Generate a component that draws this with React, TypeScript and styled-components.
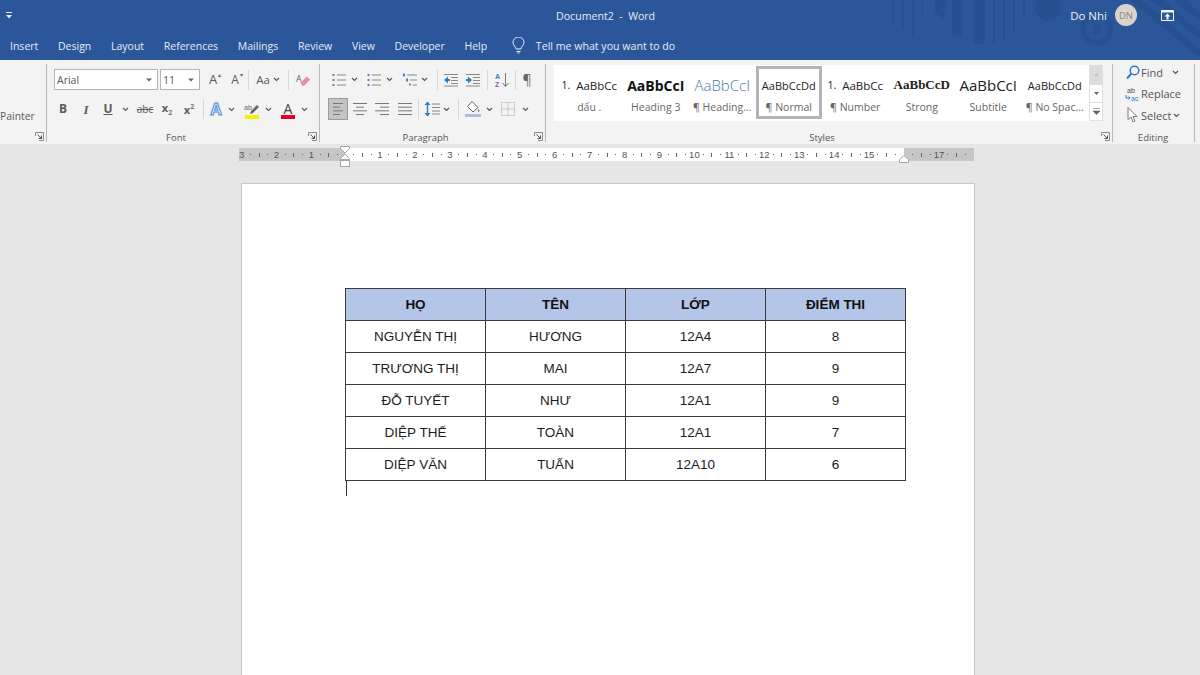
import React from "react";
import styled, { createGlobalStyle } from "styled-components";

const UI = `"Open Sans", "Noto Sans", sans-serif`;
const DOC = `"Liberation Sans", Arial, sans-serif`;

const GlobalStyle = createGlobalStyle`
  html, body { margin: 0; padding: 0; background: #e6e6e6; }
  * { box-sizing: border-box; }
`;

const Shell = styled.div`
  width: 1200px;
  height: 675px;
  overflow: hidden;
  font-family: ${UI};
  background: #e6e6e6;
`;

const Header = styled.header`
  position: relative;
  height: 60px;
  background: #2b579a;
  color: #f1f4f9;
  overflow: hidden;
`;

const Watermark = styled.svg`
  position: absolute;
  left: 880px;
  top: 0;
`;

const TitleRow = styled.div`
  position: relative;
  height: 30px;
  display: grid;
  grid-template-columns: 556px auto 1fr;
  align-items: center;
`;

const Qat = styled.svg`
  margin-left: 6px;
`;

const DocTitle = styled.div`
  padding-top: 1px;
  font-size: 10.6px;
  white-space: pre;
  color: #e4eaf3;
`;

const UserBox = styled.div`
  justify-self: end;
  display: flex;
  align-items: center;
  padding-right: 26px;
`;

const UserName = styled.span`
  font-size: 11.5px;
  color: #eef2f8;
`;

const Avatar = styled.div`
  width: 22px;
  height: 22px;
  border-radius: 50%;
  margin-left: 8px;
  background: #dad5cb;
  color: #8a8782;
  font-size: 9.5px;
  display: flex;
  align-items: center;
  justify-content: center;
`;

const Restore = styled.svg`
  margin-left: 24px;
`;

const TabRow = styled.nav`
  position: relative;
  height: 30px;
  padding: 1px 0 0 10px;
  display: flex;
  align-items: center;
  gap: 19.7px;
  font-size: 10.5px;
  color: #e6ebf4;
`;

const TellMe = styled.div`
  display: flex;
  align-items: center;
  gap: 11px;
  margin-left: 5px;
  font-size: 10.6px;
`;

const Ribbon = styled.section`
  height: 84px;
  padding-top: 4px;
  display: flex;
  background: #f3f3f3;
  color: #444;
`;

const Group = styled.div<{ $w: number }>`
  width: ${(p) => p.$w}px;
  height: 78px;
  flex: none;
  display: flex;
  flex-direction: column;
  border-right: 1px solid #b9b9b9;
`;

const GroupBody = styled.div<{ $left?: number; $top?: number }>`
  flex: 1;
  min-height: 0;
  padding-left: ${(p) => p.$left ?? 0}px;
  padding-top: ${(p) => p.$top ?? 0}px;
`;

const GroupFoot = styled.div`
  height: 12px;
  padding: 1px 2px 0 0;
  display: flex;
  align-items: center;
`;

const GroupLabel = styled.div<{ $flush?: boolean }>`
  flex: 1;
  margin-right: ${(p) => (p.$flush ? -1 : 3)}px;
  padding-top: 2px;
  text-align: center;
  font-size: 9.5px;
  line-height: 10px;
  color: #555;
`;

const ToolRow = styled.div<{ $h: number; $mt?: number }>`
  height: ${(p) => p.$h}px;
  margin-top: ${(p) => p.$mt ?? 0}px;
  display: flex;
  align-items: center;
`;

const Cell = styled.div<{ $w?: number; $ml?: number; $active?: boolean; $h?: number }>`
  position: relative;
  flex: none;
  width: ${(p) => p.$w ?? 16}px;
  height: ${(p) => p.$h ?? 18}px;
  margin-left: ${(p) => p.$ml ?? 0}px;
  display: flex;
  align-items: center;
  justify-content: center;
  color: #5c5c5c;
  background: ${(p) => (p.$active ? "#c4c4c4" : "transparent")};
  outline: ${(p) => (p.$active ? "1px solid #9c9c9c" : "none")};
  outline-offset: -1px;
`;

const Divider = styled.div<{ $ml?: number }>`
  flex: none;
  width: 1px;
  height: 20px;
  margin-left: ${(p) => p.$ml ?? 0}px;
  background: #d6d6d6;
`;

const Combo = styled.div<{ $w: number; $ml?: number }>`
  flex: none;
  width: ${(p) => p.$w}px;
  height: 21px;
  margin-left: ${(p) => p.$ml ?? 0}px;
  padding: 0 5px 0 2px;
  display: flex;
  align-items: center;
  justify-content: space-between;
  border: 1px solid #b4b4b4;
  background: #fff;
  font-size: 10.5px;
  color: #555;
`;

const Glyph = styled.span<{ $size?: number; $bold?: boolean; $italic?: boolean; $serif?: boolean; $under?: boolean; $strike?: boolean; $color?: string }>`
  font-size: ${(p) => p.$size ?? 12}px;
  line-height: 1;
  font-weight: ${(p) => (p.$bold ? 700 : 400)};
  font-style: ${(p) => (p.$italic ? "italic" : "normal")};
  font-family: ${(p) => (p.$serif ? `"Liberation Serif", serif` : UI)};
  text-decoration: ${(p) => (p.$under ? "underline" : p.$strike ? "line-through" : "none")};
  color: ${(p) => p.$color ?? "#5c5c5c"};
  white-space: nowrap;
`;

const PainterText = styled.span`
  font-size: 10.4px;
  line-height: 14px;
  color: #5c5c5c;
`;

const TinyScript = styled.span<{ $up?: boolean }>`
  font-size: 7px;
  vertical-align: ${(p) => (p.$up ? "5px" : "-3px")};
  color: #777;
`;

const OutlineA = styled.span`
  font-size: 16px;
  line-height: 1;
  font-weight: 700;
  color: #dbe9f8;
  -webkit-text-stroke: 1px #4d8fd6;
`;

const ColorBar = styled.div<{ $c: string }>`
  position: absolute;
  left: 1px;
  right: 1px;
  bottom: 0;
  height: 4px;
  background: ${(p) => p.$c};
`;

const SizeCaret = styled.span`
  position: absolute;
  top: 1px;
  right: 0;
  font-size: 6px;
  line-height: 1;
  color: #666;
`;

const Gallery = styled.div`
  width: 549px;
  height: 56px;
  margin: 1px 0 0 8px;
  padding-left: 2px;
  display: flex;
  background: #fff;
`;

const StyleItem = styled.div<{ $active?: boolean }>`
  width: 66.5px;
  height: 53px;
  margin-top: 1px;
  flex: none;
  display: flex;
  flex-direction: column;
  align-items: center;
  border: 3px solid ${(p) => (p.$active ? "#b4b4b4" : "transparent")};
  overflow: hidden;
`;

const SampleLine = styled.div<{ $size: number; $bold?: boolean; $serif?: boolean; $color?: string; $light?: boolean }>`
  height: 26px;
  margin-top: 3px;
  display: flex;
  align-items: center;
  width: 100%;
  justify-content: center;
  overflow: hidden;
  white-space: pre;
  font-size: ${(p) => p.$size}px;
  font-weight: ${(p) => (p.$bold ? 700 : p.$light ? 300 : 400)};
  font-family: ${(p) => (p.$serif ? `"Liberation Serif", serif` : UI)};
  color: ${(p) => p.$color ?? "#222"};
`;

const NumberMark = styled.span`
  font-size: 10.5px;
  margin-right: 6px;
  flex: none;
`;

const StyleName = styled.div`
  margin-top: 2px;
  font-size: 10.5px;
  line-height: 14px;
  color: #666;
  white-space: nowrap;
`;

const GalleryScroll = styled.div`
  width: 14px;
  margin-left: auto;
  flex: none;
  display: flex;
  flex-direction: column;
  border-left: 1px solid #e0e0e0;
  border-right: 1px solid #e0e0e0;
`;

const ScrollBtn = styled.div<{ $fill?: boolean; $h: number }>`
  height: ${(p) => p.$h}px;
  display: flex;
  align-items: center;
  justify-content: center;
  background: ${(p) => (p.$fill ? "#dcdcdc" : "#fff")};
  border-bottom: 1px solid #e0e0e0;
`;

const EditList = styled.div`
  padding-left: 11px;
  display: flex;
  flex-direction: column;
  gap: 5.5px;
`;

const EditRow = styled.div`
  height: 16px;
  display: flex;
  align-items: center;
  font-size: 11px;
  color: #555;
`;

const EditIcon = styled.div`
  width: 17px;
  display: flex;
  justify-content: center;
`;

const EditChevron = styled.div<{ $ml: number }>`
  display: flex;
  margin-left: ${(p) => p.$ml}px;
`;

const Workspace = styled.main`
  position: relative;
  padding-top: 4px;
`;

const Ruler = styled.div`
  position: relative;
  width: 735px;
  height: 13px;
  margin-left: 239px;
  display: flex;
  font-family: ${DOC};
  font-size: 9.5px;
  color: #555;
`;

const RulerPart = styled.div<{ $w: number; $white?: boolean; $end?: boolean; $pad?: number }>`
  width: ${(p) => p.$w}px;
  height: 100%;
  flex: none;
  display: flex;
  align-items: center;
  justify-content: ${(p) => (p.$end ? "flex-end" : "flex-start")};
  padding-left: ${(p) => (p.$end ? 0 : p.$pad ?? 0)}px;
  padding-right: ${(p) => (p.$end ? p.$pad ?? 0 : 0)}px;
  background: ${(p) => (p.$white ? "#fff" : "#c6c6c6")};
`;

const Tick = styled.span`
  flex: none;
  width: 8.74px;
  display: flex;
  align-items: center;
  justify-content: center;
  white-space: nowrap;
`;

const TickDot = styled.i`
  width: 1px;
  height: 1px;
  background: #666;
`;

const TickBar = styled.i`
  width: 1px;
  height: 4px;
  background: #666;
`;

const IndentMark = styled.svg<{ $x: number; $y: number }>`
  position: absolute;
  left: ${(p) => p.$x}px;
  top: ${(p) => p.$y}px;
`;

const Page = styled.article`
  width: 734px;
  height: 560px;
  margin: 22px 0 0 241px;
  padding: 104px 0 0 103px;
  background: #fff;
  border: 1px solid #c9c9c9;
  font-family: ${DOC};
`;

const ScoreTable = styled.table`
  width: 561px;
  border-collapse: collapse;
  table-layout: fixed;
  font-size: 13.5px;
  color: #1c1c1c;
`;

const HeadCell = styled.th`
  height: 32px;
  padding: 0 0 1px;
  border: 1px solid #3c3c3c;
  background: #b4c6e7;
  font-weight: 700;
  font-size: 13.5px;
  color: #111;
`;

const BodyCell = styled.td`
  height: 32px;
  padding: 0 0 1px;
  border: 1px solid #3c3c3c;
  text-align: center;
`;

const Caret = styled.div`
  width: 1px;
  height: 15px;
  margin-left: 1px;
  background: #333;
`;

const Chevron = () => (
  <svg width="7" height="5" viewBox="0 0 7 5">
    <path d="M1 1l2.5 2.5L6 1" fill="none" stroke="#555" strokeWidth="1.1" />
  </svg>
);

const ComboArrow = () => (
  <svg width="6" height="4" viewBox="0 0 6 4">
    <path d="M0 .5h6L3 3.5z" fill="#666" />
  </svg>
);

const Launcher = () => (
  <svg width="9" height="9" viewBox="0 0 9 9">
    <path d="M.5 4V.5h8v8H4" fill="none" stroke="#8a8a8a" />
    <path d="M2.5 2.5l4 4M3.5 6.5h3v-3" fill="none" stroke="#555" />
  </svg>
);

const Lines = ({ rows }: { rows: [number, number][] }) => (
  <svg width="16" height="16" viewBox="0 0 16 16">
    {rows.map(([a, b], i) => (
      <path key={i} d={`M${a} ${2.5 + (i * 11) / (rows.length - 1)}H${b}`} stroke="#777" />
    ))}
  </svg>
);

const BulletList = ({ numbered }: { numbered?: boolean }) => (
  <svg width="16" height="16" viewBox="0 0 16 16">
    {[3, 8, 13].map((y) => (
      <g key={y}>
        <rect x="1.5" y={y - 1} width="2" height="2" fill={numbered ? "#4c86c6" : "#66809c"} />
        <path d={`M6 ${y}h9`} stroke="#888" />
      </g>
    ))}
  </svg>
);

const MultiList = () => (
  <svg width="16" height="16" viewBox="0 0 16 16">
    <rect x="1" y="1.5" width="2" height="3" fill="#4c86c6" />
    <rect x="4" y="6.5" width="2" height="3" fill="#4c86c6" />
    <rect x="7" y="11.5" width="2" height="2" fill="#888" />
    <path d="M5 3h10M8 8h7M11 13h4" stroke="#888" />
  </svg>
);

const IndentIcon = ({ out }: { out?: boolean }) => (
  <svg width="16" height="16" viewBox="0 0 16 16">
    <path d="M1 2.5h14M8 5.5h7M8 8.5h7M8 11.5h7M1 14h14" stroke="#888" />
    <path d={out ? "M1 8l4-3.5V7h2v2H5v2.5z" : "M7 8L3 4.500V7H1v2h2v2.500z"} fill="#2f7cc4" />
  </svg>
);

const SortIcon = () => (
  <svg width="16" height="16" viewBox="0 0 16 16" fontFamily={DOC} fontSize="7" fontWeight="700">
    <text x="1" y="7" fill="#3e7fc4">A</text>
    <text x="1" y="15" fill="#9b58a8">Z</text>
    <path d="M11.500 1v13M8.500 11l3 3.500 3-3.500" fill="none" stroke="#777" />
  </svg>
);

const LineSpacing = () => (
  <svg width="16" height="18" viewBox="0 0 16 18">
    <path d="M3.500 2.500v13" stroke="#2f7cc4" strokeWidth="1.400" />
    <path d="M0.500 5l3-3.500 3 3.500zM0.500 13l3 3.500 3-3.500z" fill="#2f7cc4" />
    <path d="M8 4h8M8 7.500h8M8 11h8M8 14h8" stroke="#888" />
  </svg>
);

const ShadingIcon = () => (
  <svg width="16" height="18" viewBox="0 0 16 18">
    <path d="M7 1.500l6 6-5 4.500-5.500-5.500z" fill="#fff" stroke="#666" />
    <path d="M13.500 9c1 1.500 1.500 2.500 0 3-1-.5-1-1.500 0-3z" fill="#3f86cf" />
    <rect x="0" y="14" width="16" height="3" fill="#a9bfdd" />
  </svg>
);

const BordersIcon = () => (
  <svg width="16" height="16" viewBox="0 0 16 16">
    <path d="M1.500 1.500h13v13h-13zM8 1.500v13M1.500 8h13" fill="none" stroke="#a8a8a8" strokeDasharray="1 1" />
  </svg>
);

const EraserIcon = () => (
  <svg width="18" height="16" viewBox="0 0 18 16">
    <text x="0" y="10" fontSize="10" fontFamily={UI} fill="#666">A</text>
    <path d="M5 11l7-7 4 3.500-7 7H7z" fill="#ea8fa0" />
  </svg>
);

const HighlightIcon = () => (
  <svg width="16" height="13" viewBox="0 0 16 13">
    <text x="0" y="6.500" fontSize="7" fontFamily={DOC} fill="#666">ab</text>
    <path d="M6 11l1-3 6-6 2 2-6 6z" fill="#666" />
  </svg>
);

const FindIcon = () => (
  <svg width="14" height="15" viewBox="0 0 14 15">
    <circle cx="8.500" cy="5.500" r="4.300" fill="none" stroke="#2f7cc4" strokeWidth="1.500" />
    <path d="M5.500 8.500L1 13.500" stroke="#2f7cc4" strokeWidth="2" />
  </svg>
);

const ReplaceIcon = () => (
  <svg width="16" height="16" viewBox="0 0 16 16" fontFamily={DOC} fontSize="7">
    <text x="2" y="7" fill="#4a4a4a">ab</text>
    <text x="6" y="15" fill="#2f7cc4">ac</text>
    <path d="M1 9v3h4M3.500 10.500L5 12l-1.500 1.500" fill="none" stroke="#2f7cc4" />
  </svg>
);

const SelectIcon = () => (
  <svg width="11" height="16" viewBox="0 0 11 16">
    <path d="M1 .5v12l3-2.500 2 5 2-1-2-4.500h4z" fill="#fff" stroke="#7a7a7a" />
  </svg>
);

const rulerTicks = (marks: (number | "." | "|")[]) =>
  marks.map((m, i) => (
    <Tick key={i}>{m === "." ? <TickDot /> : m === "|" ? <TickBar /> : m}</Tick>
  ));

const leftMarks: (number | "." | "|")[] = [3, ".", "|", ".", 2, ".", "|", ".", 1, ".", "|", "."];
const middleMarks: (number | "." | "|")[] = Array.from({ length: 15 }, (_, i) => i + 1).flatMap((n) => [".", "|", ".", n] as (number | "." | "|")[]);
const endMarks: (number | "." | "|")[] = [".", "|", ".", 17, ".", "|", "."];

const tabs = ["Insert", "Design", "Layout", "References", "Mailings", "Review", "View", "Developer", "Help"];

const rows = [
  ["NGUYỄN THỊ", "HƯƠNG", "12A4", "8"],
  ["TRƯƠNG THỊ", "MAI", "12A7", "9"],
  ["ĐỖ TUYẾT", "NHƯ", "12A1", "9"],
  ["DIỆP THẾ", "TOÀN", "12A1", "7"],
  ["DIỆP VĂN", "TUẤN", "12A10", "6"],
];

const App = () => (
  <Shell>
    <GlobalStyle />
    <Header>
      <Watermark width="320" height="60" viewBox="0 0 320 60" fill="#26508f">
        <path d="M12 0h2v23h-2zM22 0h2v30h-2zM32 0h2v38h-2zM42 0h1v20h-1zM55 0h12l-4 20-8-8zM72 0h10v38l-10-3zM94 0h11v44H94zM113 0h2v44h-2zM123 0h2v40h-2zM133 0h2v32h-2zM143 0h2v20h-2z" />
        <circle cx="168" cy="8" r="13" />
        <circle cx="217" cy="29" r="14" fill="none" stroke="#26508f" strokeWidth="5" />
        <circle cx="217" cy="29" r="5" />
        <path d="M250 0l70 58v-8L262 0zM272 0l48 40v-8L284 0zM294 0l26 22v-8L306 0z" />
      </Watermark>
      <TitleRow>
        <Qat width="6" height="7" viewBox="0 0 6 7">
          <path d="M0 0h6v1H0zM0 3h6L3 6.500z" fill="#e6ebf4" />
        </Qat>
        <DocTitle>Document2  -  Word</DocTitle>
        <UserBox>
          <UserName>Do Nhi</UserName>
          <Avatar>DN</Avatar>
          <Restore width="13" height="11" viewBox="0 0 13 11">
            <path d="M.5.500h12v10H.500z" fill="none" stroke="#f1f4f9" />
            <path d="M.5.500h12v2H.500z" fill="#f1f4f9" />
            <path d="M6.500 3.500l3 3H7.500v3h-2v-3h-2z" fill="#f1f4f9" />
          </Restore>
        </UserBox>
      </TitleRow>
      <TabRow>
        {tabs.map((t) => (
          <span key={t}>{t}</span>
        ))}
        <TellMe>
          <svg width="13" height="17" viewBox="0 0 13 17">
            <path d="M4.200 12c0-2-3.200-3.500-3.200-6.500a5.500 5.500 0 0 1 11 0C12 8.500 8.800 10 8.800 12zM4.500 14.500h4M5.500 16h2" fill="none" stroke="#eef2f8" />
          </svg>
          <span>Tell me what you want to do</span>
        </TellMe>
      </TabRow>
    </Header>

    <Ribbon>
      <Group $w={47}>
        <GroupBody $top={39}>
          <PainterText>Painter</PainterText>
        </GroupBody>
        <GroupFoot>
          <GroupLabel />
          <Launcher />
        </GroupFoot>
      </Group>

      <Group $w={273}>
        <GroupBody $left={7} $top={5}>
          <ToolRow $h={21}>
            <Combo $w={104}>Arial<ComboArrow /></Combo>
            <Combo $w={40} $ml={2}>11<ComboArrow /></Combo>
            <Cell $ml={5}><Glyph $size={13}>A</Glyph><SizeCaret>▴</SizeCaret></Cell>
            <Cell $ml={6}><Glyph $size={12}>A</Glyph><SizeCaret>▾</SizeCaret></Cell>
            <Divider $ml={5} />
            <Cell $ml={6}><Glyph $size={11.500}>Aa</Glyph></Cell>
            <Cell $ml={2} $w={7}><Chevron /></Cell>
            <Divider $ml={8} />
            <Cell $ml={7}><EraserIcon /></Cell>
          </ToolRow>
          <ToolRow $h={22} $mt={8}>
            <Cell $ml={1}><Glyph $bold>B</Glyph></Cell>
            <Cell $ml={7}><Glyph $italic $bold $serif $size={13}>I</Glyph></Cell>
            <Cell $ml={6}><Glyph $bold $under>U</Glyph></Cell>
            <Cell $ml={5.500} $w={7}><Chevron /></Cell>
            <Cell $ml={8.500}><Glyph $strike $size={10}>abc</Glyph></Cell>
            <Cell $ml={6}><Glyph $bold $size={11}>x<TinyScript>2</TinyScript></Glyph></Cell>
            <Cell $ml={6}><Glyph $bold $size={11}>x<TinyScript $up>2</TinyScript></Glyph></Cell>
            <Divider $ml={6} />
            <Cell $ml={4}><OutlineA>A</OutlineA></Cell>
            <Cell $ml={3.500} $w={7}><Chevron /></Cell>
            <Cell $ml={9.500} $h={19}><HighlightIcon /><ColorBar $c="#f5f000" /></Cell>
            <Cell $ml={4.500} $w={7}><Chevron /></Cell>
            <Cell $ml={8.500} $h={19}><Glyph $size={14} $color="#444">A</Glyph><ColorBar $c="#e6001f" /></Cell>
            <Cell $ml={4.500} $w={7}><Chevron /></Cell>
          </ToolRow>
        </GroupBody>
        <GroupFoot>
          <GroupLabel>Font</GroupLabel>
          <Launcher />
        </GroupFoot>
      </Group>

      <Group $w={226}>
        <GroupBody $left={7} $top={5}>
          <ToolRow $h={21}>
            <Cell $ml={4}><BulletList /></Cell>
            <Cell $ml={4} $w={7}><Chevron /></Cell>
            <Cell $ml={8}><BulletList numbered /></Cell>
            <Cell $ml={4} $w={7}><Chevron /></Cell>
            <Cell $ml={9}><MultiList /></Cell>
            <Cell $ml={3} $w={7}><Chevron /></Cell>
            <Divider $ml={9} />
            <Cell $ml={5}><IndentIcon out /></Cell>
            <Cell $ml={6}><IndentIcon /></Cell>
            <Divider $ml={6} />
            <Cell $ml={6}><SortIcon /></Cell>
            <Divider $ml={5} />
            <Cell $ml={3}><Glyph $size={14} $color="#666">¶</Glyph></Cell>
          </ToolRow>
          <ToolRow $h={22} $mt={8}>
            <Cell $ml={1} $w={20} $h={22} $active><Lines rows={[[3, 13], [3, 10], [3, 13], [3, 10]]} /></Cell>
            <Cell $ml={4}><Lines rows={[[1, 15], [4, 12], [1, 15], [4, 12]]} /></Cell>
            <Cell $ml={6}><Lines rows={[[1, 15], [6, 15], [1, 15], [6, 15]]} /></Cell>
            <Cell $ml={7}><Lines rows={[[1, 15], [1, 15], [1, 15], [1, 15]]} /></Cell>
            <Divider $ml={5} />
            <Cell $ml={5}><LineSpacing /></Cell>
            <Cell $ml={2.500} $w={7}><Chevron /></Cell>
            <Divider $ml={8.500} />
            <Cell $ml={6}><ShadingIcon /></Cell>
            <Cell $ml={4.500} $w={7}><Chevron /></Cell>
            <Cell $ml={7.500}><BordersIcon /></Cell>
            <Cell $ml={5.500} $w={7}><Chevron /></Cell>
          </ToolRow>
        </GroupBody>
        <GroupFoot>
          <GroupLabel>Paragraph</GroupLabel>
          <Launcher />
        </GroupFoot>
      </Group>

      <Group $w={567}>
        <GroupBody>
          <Gallery>
            <StyleItem>
              <SampleLine $size={11.500}><NumberMark>1.</NumberMark>AaBbCc</SampleLine>
              <StyleName>dấu .</StyleName>
            </StyleItem>
            <StyleItem>
              <SampleLine $size={14} $bold $color="#111">AaBbCcI</SampleLine>
              <StyleName>Heading 3</StyleName>
            </StyleItem>
            <StyleItem>
              <SampleLine $size={15} $light $color="#4e78ad">AaBbCcI</SampleLine>
              <StyleName>¶ Heading...</StyleName>
            </StyleItem>
            <StyleItem $active>
              <SampleLine $size={11}>AaBbCcDd</SampleLine>
              <StyleName>¶ Normal</StyleName>
            </StyleItem>
            <StyleItem>
              <SampleLine $size={11.500}><NumberMark>1.</NumberMark>AaBbCc</SampleLine>
              <StyleName>¶ Number</StyleName>
            </StyleItem>
            <StyleItem>
              <SampleLine $size={13} $bold $serif>AaBbCcD</SampleLine>
              <StyleName>Strong</StyleName>
            </StyleItem>
            <StyleItem>
              <SampleLine $size={15}>AaBbCcI</SampleLine>
              <StyleName>Subtitle</StyleName>
            </StyleItem>
            <StyleItem>
              <SampleLine $size={11}>AaBbCcDd</SampleLine>
              <StyleName>¶ No Spac...</StyleName>
            </StyleItem>
            <GalleryScroll>
              <ScrollBtn $h={20} $fill><svg width="5" height="3"><path d="M0 3l2.500-3L5 3z" fill="#c4c4c4" /></svg></ScrollBtn>
              <ScrollBtn $h={18}><svg width="5" height="3"><path d="M0 0l2.500 3L5 0z" fill="#666" /></svg></ScrollBtn>
              <ScrollBtn $h={18}><svg width="7" height="7"><path d="M0 .5h7M0 3h7L3.500 6.500z" stroke="#666" strokeWidth=".6" fill="#666" /></svg></ScrollBtn>
            </GalleryScroll>
          </Gallery>
        </GroupBody>
        <GroupFoot>
          <GroupLabel>Styles</GroupLabel>
          <Launcher />
        </GroupFoot>
      </Group>

      <Group $w={82}>
        <GroupBody>
          <EditList>
            <EditRow>
              <EditIcon><FindIcon /></EditIcon>
              Find
              <EditChevron $ml={9}><Chevron /></EditChevron>
            </EditRow>
            <EditRow>
              <EditIcon><ReplaceIcon /></EditIcon>
              Replace
            </EditRow>
            <EditRow>
              <EditIcon><SelectIcon /></EditIcon>
              Select
              <EditChevron $ml={2}><Chevron /></EditChevron>
            </EditRow>
          </EditList>
        </GroupBody>
        <GroupFoot>
          <GroupLabel $flush>Editing</GroupLabel>
        </GroupFoot>
      </Group>
    </Ribbon>

    <Workspace>
      <Ruler>
        <RulerPart $w={106} $end $pad={3}>{rulerTicks(leftMarks)}</RulerPart>
        <RulerPart $w={559} $white $pad={4.400}>{rulerTicks(middleMarks)}{rulerTicks([".", "|", "."])}</RulerPart>
        <RulerPart $w={70} $pad={4.400}>{rulerTicks(endMarks)}</RulerPart>
        <IndentMark $x={100} $y={-2} width="12" height="21" viewBox="0 0 12 21">
          <path d="M1.500.5h9v2L6 7 1.500 2.500zM6 8l4.500 4.500v1h-9v-1z" fill="#fff" stroke="#a5a5a5" />
          <rect x="1.500" y="14.500" width="9" height="6" fill="#fff" stroke="#a5a5a5" />
        </IndentMark>
        <IndentMark $x={660} $y={7} width="10" height="8" viewBox="0 0 10 8">
          <path d="M5 .5l4.500 4v3h-9v-3z" fill="#fff" stroke="#a5a5a5" />
        </IndentMark>
      </Ruler>
      <Page>
        <ScoreTable>
          <thead>
            <tr>
              {["HỌ", "TÊN", "LỚP", "ĐIỂM THI"].map((h) => (
                <HeadCell key={h}>{h}</HeadCell>
              ))}
            </tr>
          </thead>
          <tbody>
            {rows.map((r) => (
              <tr key={r[0]}>
                {r.map((c, i) => (
                  <BodyCell key={i}>{c}</BodyCell>
                ))}
              </tr>
            ))}
          </tbody>
        </ScoreTable>
        <Caret />
      </Page>
    </Workspace>
  </Shell>
);

export default App;
